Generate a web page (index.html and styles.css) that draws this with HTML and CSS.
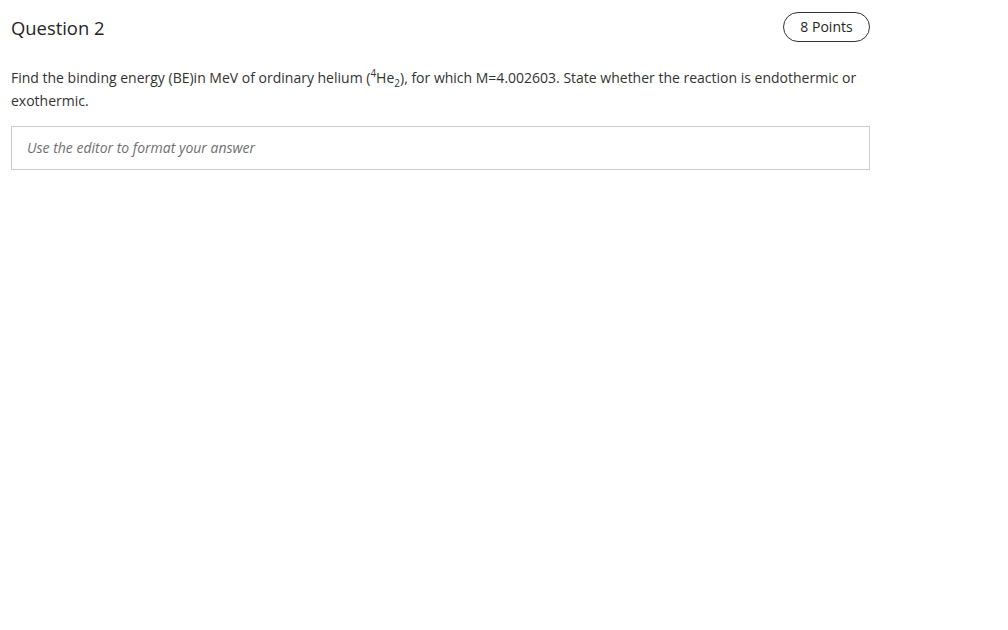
FILE: index.html
```html
<!DOCTYPE html>
<html>
<head>
<meta charset="utf-8">
<link rel="stylesheet" href="styles.css">
</head>
<body>
<div class="question">
  <div class="header">
    <h2 class="title">Question 2</h2>
    <span class="points">8 Points</span>
  </div>
  <p class="prompt">Find the binding energy (BE)in MeV of ordinary helium (<sup>4</sup>He<sub>2</sub>), for which M=4.002603. State whether the reaction is endothermic or exothermic.</p>
  <div class="answer">Use the editor to format your answer</div>
</div>
</body>
</html>
```
FILE: styles.css
```css
body {
  margin: 0;
  background: #fff;
  font-family: "Open Sans", "Noto Sans", sans-serif;
  color: #333;
}
.question {
  width: 859px;
  margin-left: 11px;
  padding-top: 12px;
}
.header {
  display: flex;
  justify-content: space-between;
  align-items: center;
  height: 30px;
}
.title {
  margin: 0;
  font-size: 18.4px;
  font-weight: 400;
  color: #252525;
}
.points {
  box-sizing: border-box;
  height: 30px;
  width: 87px;
  text-align: center;
  border: 1px solid #333;
  border-radius: 15px;
  font-size: 14px;
  line-height: 28px;
  color: #252525;
}
.prompt {
  margin: 24px 0 0;
  font-size: 14px;
  line-height: 23px;
  color: #333;
}
.prompt sup, .prompt sub {
  font-size: 10px;
  line-height: 0;
}
.answer {
  margin-top: 14px;
  box-sizing: border-box;
  height: 44px;
  border: 1px solid #ccc;
  padding: 0 15px;
  font-size: 14px;
  font-style: italic;
  line-height: 42px;
  color: #707070;
}
```
